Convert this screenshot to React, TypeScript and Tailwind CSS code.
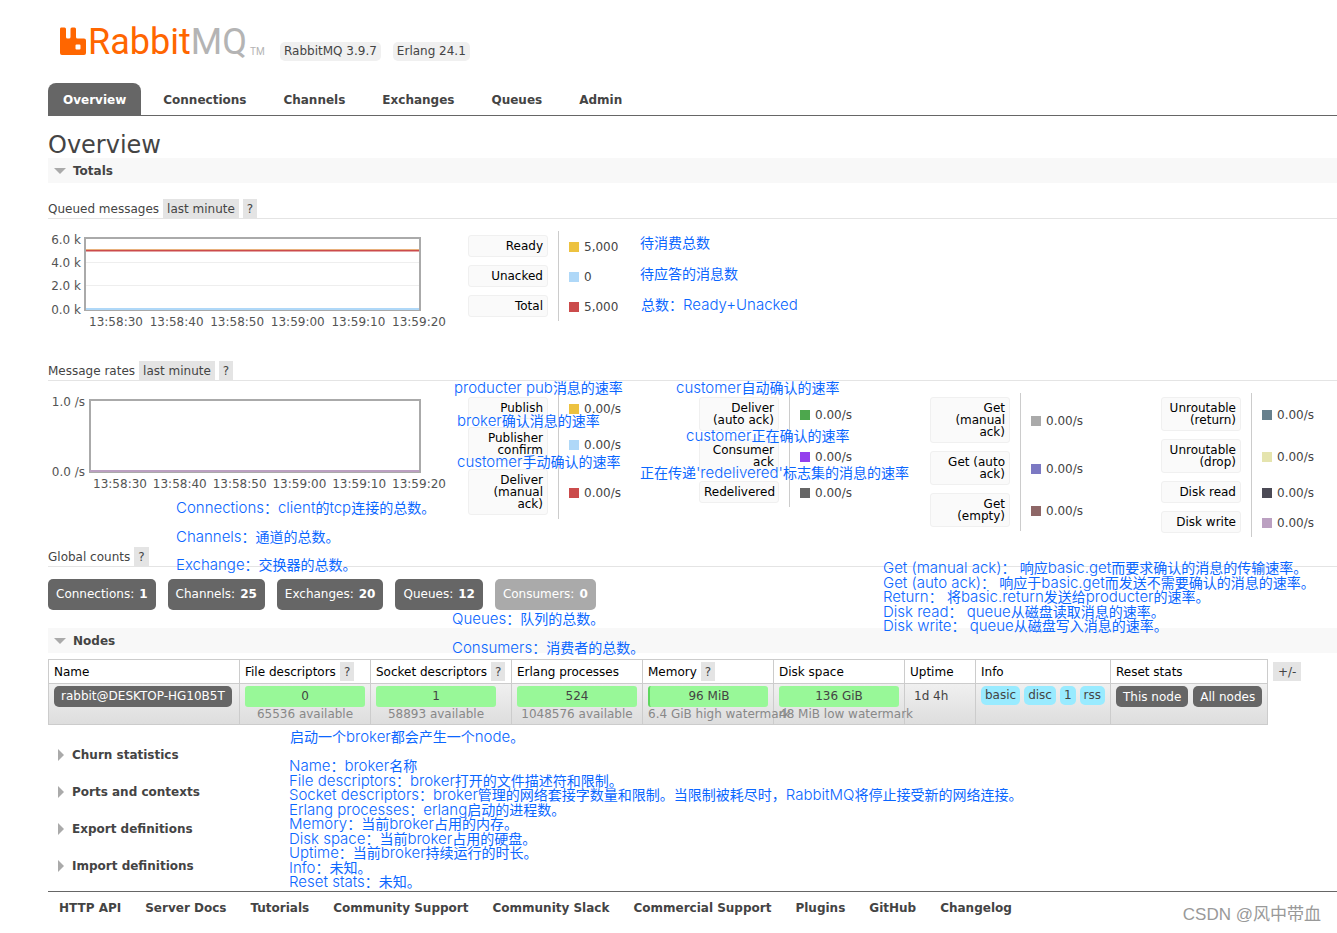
import type { ReactNode } from "react";

const tabs = ["Overview", "Connections", "Channels", "Exchanges", "Queues", "Admin"];

const footerLinks = [
  "HTTP API",
  "Server Docs",
  "Tutorials",
  "Community Support",
  "Community Slack",
  "Commercial Support",
  "Plugins",
  "GitHub",
  "Changelog",
];

const collapsed = ["Churn statistics", "Ports and contexts", "Export definitions", "Import definitions"];

const counts = [
  { label: "Connections:", value: 1 },
  { label: "Channels:", value: 25 },
  { label: "Exchanges:", value: 20 },
  { label: "Queues:", value: 12 },
  { label: "Consumers:", value: 0 },
];

type LegendRow = { label: string; color: string; value: string };

const queued: LegendRow[] = [
  { label: "Ready", color: "bg-[#edc240]", value: "5,000" },
  { label: "Unacked", color: "bg-[#afd8f8]", value: "0" },
  { label: "Total", color: "bg-[#cb4b4b]", value: "5,000" },
];

const rates: LegendRow[][] = [
  [
    { label: "Publish", color: "bg-[#edc240]", value: "0.00/s" },
    { label: "Publisher\nconfirm", color: "bg-[#afd8f8]", value: "0.00/s" },
    { label: "Deliver\n(manual\nack)", color: "bg-[#cb4b4b]", value: "0.00/s" },
  ],
  [
    { label: "Deliver\n(auto ack)", color: "bg-[#4da74d]", value: "0.00/s" },
    { label: "Consumer\nack", color: "bg-[#9440ed]", value: "0.00/s" },
    { label: "Redelivered", color: "bg-[#666666]", value: "0.00/s" },
  ],
  [
    { label: "Get\n(manual\nack)", color: "bg-[#aaaaaa]", value: "0.00/s" },
    { label: "Get (auto\nack)", color: "bg-[#7c79c3]", value: "0.00/s" },
    { label: "Get\n(empty)", color: "bg-[#8e6767]", value: "0.00/s" },
  ],
  [
    { label: "Unroutable\n(return)", color: "bg-[#67808d]", value: "0.00/s" },
    { label: "Unroutable\n(drop)", color: "bg-[#e5e4ae]", value: "0.00/s" },
    { label: "Disk read", color: "bg-[#4b4a55]", value: "0.00/s" },
    { label: "Disk write", color: "bg-[#bba0c1]", value: "0.00/s" },
  ],
];

const notes: { place: string; lines: string[] }[] = [
  { place: "left-[640px] top-[236px]", lines: ["待消费总数"] },
  { place: "left-[640px] top-[267px]", lines: ["待应答的消息数"] },
  { place: "left-[641px] top-[298px]", lines: ["总数：Ready+Unacked"] },
  { place: "left-[454px] top-[381px]", lines: ["producter pub消息的速率"] },
  { place: "left-[457px] top-[414px]", lines: ["broker确认消息的速率"] },
  { place: "left-[457px] top-[455px]", lines: ["customer手动确认的速率"] },
  { place: "left-[676px] top-[381px]", lines: ["customer自动确认的速率"] },
  { place: "left-[686px] top-[429px]", lines: ["customer正在确认的速率"] },
  { place: "left-[640px] top-[466px]", lines: ["正在传递'redelivered'标志集的消息的速率"] },
  {
    place: "left-[176px] top-[501px] h-[71px]",
    lines: ["Connections：client的tcp连接的总数。", "Channels：通道的总数。", "Exchange：交换器的总数。"],
  },
  { place: "left-[452px] top-[612px] h-[43px]", lines: ["Queues：队列的总数。", "Consumers：消费者的总数。"] },
  {
    place: "left-[883px] top-[561px] h-[72px]",
    lines: [
      "Get (manual ack)： 响应basic.get而要求确认的消息的传输速率。",
      "Get (auto ack)： 响应于basic.get而发送不需要确认的消息的速率。",
      "Return： 将basic.return发送给producter的速率。",
      "Disk read： queue从磁盘读取消息的速率。",
      "Disk write： queue从磁盘写入消息的速率。",
    ],
  },
  { place: "left-[290px] top-[730px]", lines: ["启动一个broker都会产生一个node。"] },
  {
    place: "left-[289px] top-[759px] h-[130px]",
    lines: [
      "Name：broker名称",
      "File descriptors：broker打开的文件描述符和限制。",
      "Socket descriptors：broker管理的网络套接字数量和限制。当限制被耗尽时，RabbitMQ将停止接受新的网络连接。",
      "Erlang processes：erlang启动的进程数。",
      "Memory：当前broker占用的内存。",
      "Disk space：当前broker占用的硬盘。",
      "Uptime：当前broker持续运行的时长。",
      "Info：未知。",
      "Reset stats：未知。",
    ],
  },
];

// Latin runs are set one size up so that they balance with the Chinese glyphs.
function NoteLine({ text }: { text: string }) {
  return (
    <p className="h-[14px]">
      {text.split(/([\x20-\x7e]+)/).map((run, i) =>
        i % 2 === 1 ? (
          <span key={i} className="inline-block text-[15px] leading-[14px] font-light">
            {run}
          </span>
        ) : (
          run
        ),
      )}
    </p>
  );
}

function Help() {
  return (
    <button type="button" aria-label="Help" className="h-[19px] bg-[#e4e4e4] px-1 text-[#444]">
      ?
    </button>
  );
}

function SubHeading({ title, range = false }: { title: string; range?: boolean }) {
  return (
    <div className="flex h-5 items-center gap-1 border-b border-[#e4e4e4]">
      <h3>{title}</h3>
      {range && (
        <button type="button" className="h-[19px] bg-[#e4e4e4] px-1">
          last minute
        </button>
      )}
      <Help />
    </div>
  );
}

function SectionBar({ title }: { title: string }) {
  return (
    <h2 className="h-[25px] bg-[#f8f8f8]">
      <button type="button" className="flex h-full items-center gap-[7px] pl-[6px] font-bold">
        <svg width="12" height="6" viewBox="0 0 12 6" aria-hidden="true">
          <path d="M0 0H12L6 6Z" fill="#aaa" />
        </svg>
        {title}
      </button>
    </h2>
  );
}

function Legend({ rows }: { rows: LegendRow[] }) {
  return (
    <table className="border-collapse self-start">
      <tbody>
        {rows.map((row) => (
          <tr key={row.label}>
            <th className="border-r border-[#ccc] py-1 pr-[10px] pl-0 font-normal">
              <div className="w-20 rounded-[3px] border border-[#f0f0f0] bg-[#fafafa] px-1 py-1 text-right leading-3 whitespace-pre text-black">
                {row.label}
              </div>
            </th>
            <td className="py-0 pl-[10px]">
              <div className="flex items-center gap-[5px] pt-[2px]">
                <span className={`size-[10px] ${row.color}`} />
                {row.value}
              </div>
            </td>
          </tr>
        ))}
      </tbody>
    </table>
  );
}

const times = ["13:58:30", "13:58:40", "13:58:50", "13:59:00", "13:59:10", "13:59:20"];

function Chart({
  label,
  left,
  ticks,
  firstTime,
  children,
}: {
  label: string;
  left: number;
  ticks: { y: number; text: string }[];
  firstTime: number;
  children: ReactNode;
}) {
  return (
    <svg width="420" height="100" viewBox="0 0 420 100" role="img" aria-label={label} className="shrink-0">
      {children}
      <g fill="#545454" fontSize="12">
        {ticks.map((t) => (
          <text key={t.text} x={left - 3} y={t.y} textAnchor="end">
            {t.text}
          </text>
        ))}
        {times.map((t, i) => (
          <text key={t} x={firstTime + (i * (371 - firstTime)) / 5} y="95" textAnchor="middle">
            {t}
          </text>
        ))}
      </g>
    </svg>
  );
}

function Meter({ value, note, used = false }: { value: string; note: string; used?: boolean }) {
  return (
    <td className="border border-[#ccc] px-[5px] py-[2px] align-top">
      <div
        className={`h-[21px] w-[120px] rounded-[3px] bg-[#98f898] text-center leading-[21px] ${
          used ? "border-l-2 border-[#5fd75f]" : ""
        }`}
      >
        {value}
      </div>
      <div className="w-[120px] text-center leading-[15px] whitespace-nowrap text-[#888]">{note}</div>
    </td>
  );
}

function Head({ children, help = false }: { children: ReactNode; help?: boolean }) {
  return (
    <th className="h-6 border border-[#ccc] px-[5px] py-0 text-left font-normal whitespace-nowrap text-black">
      <div className="flex items-center gap-1">
        {children}
        {help && <Help />}
      </div>
    </th>
  );
}

const darkTag = "h-[21px] rounded-[5px] bg-[#666] px-[7px] whitespace-nowrap text-white";

export default function App() {
  return (
    <div className="relative min-h-screen overflow-hidden bg-white pb-4 pl-12 font-['DejaVu_Sans','Noto_Sans_CJK_SC',sans-serif] text-[12px] leading-4 text-[#444]">
      <header className="flex h-[83px] items-start pt-[21px] pl-[11px]">
        <a href="#" aria-label="RabbitMQ" className="flex w-[221px] items-start">
          <svg width="28" height="29" viewBox="0 0 28 29" className="mt-[6px] shrink-0" aria-hidden="true">
            <path
              fill="#f60"
              fillRule="evenodd"
              d="M2 .5H5.500Q7 .5 7 2V10Q7 11.500 8.500 11.500H10Q11.500 11.500 11.500 10V2Q11.500 .5 13 .5H15.500Q17 .5 17 2V10Q17 11.500 18.500 11.500H25Q27 11.500 27 13.500V26Q27 28 25 28H3Q1 28 1 26V2Q1 .5 2 .5ZM17.500 17.500Q16.500 17.500 16.500 18.500V21.500Q16.500 22.500 17.500 22.500H20.500Q21.500 22.500 21.500 21.500V18.500Q21.500 17.500 20.500 17.500Z"
            />
          </svg>
          <span className="flex items-end pl-px font-[Roboto,sans-serif] text-[36px] leading-[42px]">
            <span className="text-[#f60]">Rabbit</span>
            <span className="text-[#b4b4b4]">MQ</span>
            <span className="pb-[5px] pl-[3px] text-[10px] leading-3 text-[#b4b4b4]">TM</span>
          </span>
        </a>
        <ul className="flex gap-3 pt-[21px]">
          <li className="h-[19px] rounded-[5px] bg-[#f0f0f0] px-1 leading-[19px]">RabbitMQ 3.9.7</li>
          <li className="h-[19px] rounded-[5px] bg-[#f0f0f0] px-1 leading-[19px]">Erlang 24.1</li>
        </ul>
      </header>

      <nav className="flex h-[33px] gap-[7px] border-b border-[#666] font-bold">
        {tabs.map((tab, i) => (
          <a
            key={tab}
            href="#"
            className={`h-8 rounded-t-[8px] px-[15px] leading-[34px] ${i === 0 ? "bg-[#666] text-white" : ""}`}
          >
            {tab}
          </a>
        ))}
      </nav>

      <main>
        <h1 className="pt-4 text-[24px] leading-[26px]">Overview</h1>
        <SectionBar title="Totals" />

        <section className="pt-4">
          <SubHeading title="Queued messages" range />
          <div className="flex pt-3">
            <Chart
              label="Queued messages"
              left={36}
              firstTime={68}
              ticks={[
                { y: 13, text: "6.0 k" },
                { y: 36, text: "4.0 k" },
                { y: 59, text: "2.0 k" },
                { y: 83, text: "0.0 k" },
              ]}
            >
              <path d="M38 31.500H371M38 54.500H371" stroke="#eee" />
              <path d="M38 78H371" stroke="#afd8f8" strokeWidth="2" />
              <path d="M38 19.500H371" stroke="#cb4b4b" strokeWidth="2" />
              <path d="M38 18.500H371" stroke="#edc240" strokeOpacity=".4" />
              <rect x="37" y="7" width="335" height="72" fill="none" stroke="#aaa" strokeWidth="2" />
              <path d="M38 78H371" stroke="#afd8f8" strokeWidth="2" />
            </Chart>
            <Legend rows={queued} />
          </div>
        </section>

        <section className="pt-[30px]">
          <SubHeading title="Message rates" range />
          <div className="flex min-h-[156px] pt-3">
            <Chart
              label="Message rates"
              left={40}
              firstTime={72}
              ticks={[
                { y: 13, text: "1.0 /s" },
                { y: 83, text: "0.0 /s" },
              ]}
            >
              <rect x="42" y="7" width="330" height="72" fill="none" stroke="#aaa" strokeWidth="2" />
              <path d="M42 78H371" stroke="#bba0c1" strokeWidth="2" />
            </Chart>
            {rates.map((rows) => (
              <div key={rows[0].label} className="w-[231px] shrink-0">
                <Legend rows={rows} />
              </div>
            ))}
          </div>
        </section>

        <section className="pt-[10px]">
          <SubHeading title="Global counts" />
          <div className="flex gap-3 pt-3">
            {counts.map((c) => (
              <a
                key={c.label}
                href="#"
                className={`flex gap-[5px] rounded-[5px] px-2 leading-[31px] text-white ${
                  c.value === 0 ? "bg-[#aaa]" : "bg-[#666]"
                }`}
              >
                {c.label} <b>{c.value}</b>
              </a>
            ))}
          </div>
        </section>

        <section className="pt-[18px]">
          <SectionBar title="Nodes" />
          <div className="flex items-start gap-[5px] pt-[6px]">
            <table className="w-[1220px] table-fixed border-collapse">
              <colgroup>
                <col className="w-[191px]" />
                <col className="w-[131px]" />
                <col className="w-[141px]" />
                <col className="w-[131px]" />
                <col className="w-[131px]" />
                <col className="w-[131px]" />
                <col className="w-[71px]" />
                <col className="w-[135px]" />
                <col />
              </colgroup>
              <thead>
                <tr>
                  <Head>Name</Head>
                  <Head help>File descriptors</Head>
                  <Head help>Socket descriptors</Head>
                  <Head>Erlang processes</Head>
                  <Head help>Memory</Head>
                  <Head>Disk space</Head>
                  <Head>Uptime</Head>
                  <Head>Info</Head>
                  <Head>Reset stats</Head>
                </tr>
              </thead>
              <tbody>
                <tr className="h-10 bg-linear-to-b from-[#f0f0f0] to-[#dddddd]">
                  <td className="border border-[#ccc] px-[5px] py-[2px] align-top">
                    <a href="#" className={`inline-block leading-[21px] ${darkTag}`}>
                      rabbit@DESKTOP-HG10B5T
                    </a>
                  </td>
                  <Meter value="0" note="65536 available" />
                  <Meter value="1" note="58893 available" />
                  <Meter value="524" note="1048576 available" />
                  <Meter value="96 MiB" note="6.4 GiB high watermark" used />
                  <Meter value="136 GiB" note="48 MiB low watermark" />
                  <td className="border border-[#ccc] px-[9px] py-1 align-top whitespace-nowrap">1d 4h</td>
                  <td className="border border-[#ccc] px-[5px] py-[2px] align-top">
                    <div className="flex gap-1">
                      {["basic", "disc", "1", "rss"].map((t) => (
                        <span key={t} className="rounded-[5px] bg-[#99ebff] px-1 leading-[19px]">
                          {t}
                        </span>
                      ))}
                    </div>
                  </td>
                  <td className="border border-[#ccc] px-[5px] py-[2px] align-top">
                    <div className="flex gap-[5px]">
                      <button type="button" className={darkTag}>
                        This node
                      </button>
                      <button type="button" className={darkTag}>
                        All nodes
                      </button>
                    </div>
                  </td>
                </tr>
              </tbody>
            </table>
            <button type="button" aria-label="Choose columns" className="mt-[3px] h-[19px] bg-[#e4e4e4] px-[5px]">
              +/-
            </button>
          </div>
        </section>

        <div className="flex flex-col gap-3 pt-[17px]">
          {collapsed.map((title) => (
            <h2 key={title} className="h-[25px]">
              <button type="button" className="flex h-full items-center gap-2 pl-[10px] font-bold">
                <svg width="6" height="12" viewBox="0 0 6 12" aria-hidden="true">
                  <path d="M0 0V12L6 6Z" fill="#aaa" />
                </svg>
                {title}
              </button>
            </h2>
          ))}
        </div>
      </main>

      <footer className="mt-[13px] flex gap-6 border-t border-[#666] pt-2 pl-[11px] font-bold whitespace-nowrap">
        {footerLinks.map((link) => (
          <a key={link} href="#">
            {link}
          </a>
        ))}
      </footer>

      {notes.map((note) => (
        <div
          key={note.lines[0]}
          className={`pointer-events-none absolute flex flex-col justify-between font-[Inter,'Noto_Sans_CJK_SC',sans-serif] text-[14px] leading-[14px] whitespace-pre text-[#0a66ff] ${note.place}`}
        >
          {note.lines.map((line) => (
            <NoteLine key={line} text={line} />
          ))}
        </div>
      ))}

      <p className="absolute right-4 bottom-2 font-['Liberation_Sans','Noto_Sans_CJK_SC',sans-serif] text-[17px] leading-5 text-[#999]">
        CSDN @风中带血
      </p>
    </div>
  );
}
